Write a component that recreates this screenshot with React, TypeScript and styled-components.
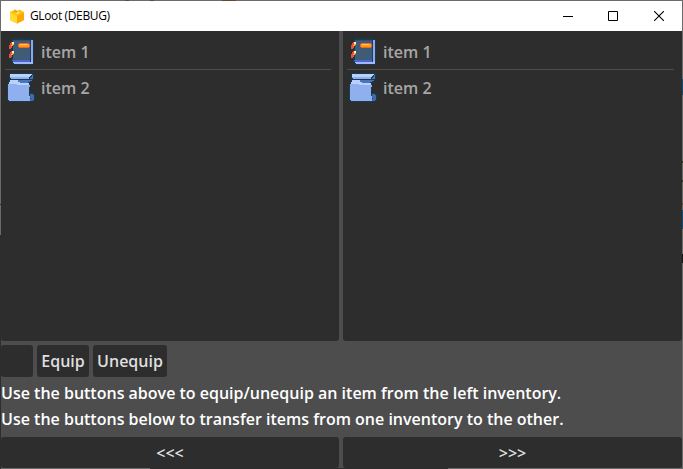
import React from 'react';
import styled, { createGlobalStyle } from 'styled-components';

const GlobalStyle = createGlobalStyle`
  * { box-sizing: border-box; }
  body { margin: 0; overflow: hidden; }
`;

const Window = styled.div`
  width: 683px;
  height: 469px;
  display: flex;
  flex-direction: column;
  background:
    linear-gradient(#2d2d2d, #2d2d2d) 0 235px / 1px 234px no-repeat,
    linear-gradient(#333, #333) 0 204px / 1px 1px no-repeat,
    linear-gradient(#174a6c, #174a6c) 682px 79px / 1px 16px no-repeat,
    linear-gradient(#3b3420, #3b3420) 682px 161px / 1px 2px no-repeat,
    linear-gradient(#3b3420, #3b3420) 682px 180px / 1px 2px no-repeat,
    linear-gradient(#674b29, #674b29) 682px 203px / 1px 2px no-repeat,
    linear-gradient(#174a6c, #174a6c) 682px 210px / 1px 19px no-repeat,
    linear-gradient(#151515, #151515) 682px 254px / 1px 9px no-repeat,
    linear-gradient(#674b29, #674b29) 222px 0 / 14px 1px no-repeat,
    linear-gradient(#674b29, #674b29) 125px 0 / 4px 1px no-repeat,
    linear-gradient(#674b29, #674b29) 150px 0 / 4px 1px no-repeat,
    linear-gradient(#2d2d2d, #2d2d2d) 150px 468px / 298px 1px no-repeat,
    #6b6b6b;
  padding: 1px;
  font-family: 'Open Sans', 'Noto Sans', sans-serif;
`;

const TitleBar = styled.header`
  height: 30px;
  flex: none;
  display: flex;
  align-items: center;
  background: #fff;
  padding-left: 8px;
`;

const Title = styled.span`
  flex: 1;
  margin-left: 5px;
  color: #000;
  font-size: 12px;
  line-height: 16px;
  letter-spacing: -0.37px;
  white-space: nowrap;
`;

const WindowButton = styled.button`
  width: 46px;
  height: 30px;
  border: 0;
  padding: 0;
  display: grid;
  place-items: center;
  background: transparent;
  &:first-of-type { padding-left: 2px; }
`;

const Content = styled.main`
  height: 437px;
  flex: none;
  display: flex;
  flex-direction: column;
  background: #4d4d4d;
`;

const Inventories = styled.div`
  display: flex;
  gap: 4px;
  height: 310px;
`;

const Inventory = styled.ul<{ $wide?: boolean }>`
  width: ${p => (p.$wide ? 339 : 338)}px;
  margin: 0;
  padding: 3px 8px 0 4px;
  list-style: none;
  background: #2d2d2d;
  border-radius: 0 0 3px 3px;
`;

const Item = styled.li`
  height: 36px;
  display: flex;
  align-items: center;
  gap: 4px;
  color: #a6a6a6;
  font-size: 16px;
  font-weight: 600;
  line-height: 22px;
  & + & { border-top: 1px solid #4c4c4c; }
  &:first-child { height: 35px; }
  svg { margin-bottom: 1px; }
`;

const Actions = styled.div`
  display: flex;
  gap: 4px;
  margin-top: 4px;
  height: 32px;
`;

const Button = styled.button<{ $width: number; $height?: number }>`
  width: ${p => p.$width}px;
  height: ${p => p.$height ?? 32}px;
  border: 0;
  border-radius: 3px;
  padding: 0;
  background: #2d2d2d;
  color: #dfdfdf;
  font: 600 16px/22px 'Open Sans', 'Noto Sans', sans-serif;
`;

const Hint = styled.p`
  margin: 4px 0 0;
  height: 22px;
  color: #fff;
  font-size: 16px;
  font-weight: 600;
  line-height: 24px;
  white-space: nowrap;
`;

const Transfers = styled.div`
  display: flex;
  gap: 4px;
  margin-top: 8px;
`;

const AppIcon = () => (
  <svg width="16" height="16" viewBox="0 0 16 16">
    <path d="M1 4 6 1.500 8 3l2.500-1.500L15 4v8l-7 3.500L1 12z" fill="#ffc20a" />
    <path d="M1 4.500l7 3.500v7.500L1 12z" fill="#ffdd30" />
    <path d="M8 8l7-3.500V12l-7 3.500z" fill="#ffa600" />
    <path d="M5 4.500 8 3l3 1.500L8 6z" fill="#fff0a0" />
    <path d="M6 1.500 8.500 3v2L5 4.500z" fill="#f5a300" />
  </svg>
);

const BookIcon = () => (
  <svg width="32" height="32" viewBox="0 0 32 32" shapeRendering="crispEdges">
    <path d="M8 3h18v1h2v1h1v23h-1v2H9v-1H7v-2H6V6h1V4h1z" fill="#19394c" />
    <path d="M8 5h17v20H8z" fill="#3f5b76" />
    <path d="M8 5h17v1H8z" fill="#344e6b" />
    <path d="M25 5h1v20h-1z" fill="#253a5e" />
    <path d="M26 5h2v22h-2z" fill="#8fa8ec" />
    <path d="M7 25h18v2H8z" fill="#4668d4" />
    <path d="M8 27h18v-1h2v3H9v-1H8z" fill="#a5b6f6" />
    <path d="M14 8h10v1h1v3h-1v1H14v-1h-1V9h1z" fill="#ee603e" />
    <path d="M14 9h10v3H14z" fill="#ff9c00" />
    <path d="M15 9h7v1h-7z" fill="#ffd044" />
    <path d="M6 7h3v3H8v1H7v2H6v1H4v-4h1V8h1zM6 16h3v3H8v1H7v2H6v1H4v-4h1v-2h1z" fill="#ef4a42" />
    <path d="M7 8h2v2H8v1H6v-1h1zM7 17h2v2H8v1H6v-1h1z" fill="#ffb21f" />
    <path d="M7 7h2v2H7zM7 16h2v2H7z" fill="#fff2a5" />
  </svg>
);

const ScrollIcon = () => (
  <svg width="32" height="32" viewBox="0 0 32 32" shapeRendering="crispEdges">
    <path d="M5 2h24v6h-1v2h-2v2h-1v10h4v1h1v6h-1v1h-3v1H3v-1H2V13h1v-2h1V3h1z" fill="#173c50" />
    <path d="M5 3h22v1h-1v1h-1v1H5z" fill="#b9d2fc" />
    <path d="M5 6h19v2H6V7H5z" fill="#8fb0f5" />
    <path d="M27 4h1v4h-2V6h1zM25 7h1v1h-1z" fill="#4d73bb" />
    <path d="M13 9h14v1h-2v1h-2v1h-8v-1h-2z" fill="#4d73bb" />
    <path d="M5 9h8v2h2v1h9v2h1v2h-1v9h1v5H4v-1H3V13h1v-2h1z" fill="#8fafee" />
    <path d="M5 9h8v2h2v1h9v2H12v-1H4v-2h1z" fill="#b9d2fc" />
    <path d="M25 23h3v1h1v5h-1v1h-3v-2h1v-1h-1z" fill="#416aae" />
  </svg>
);

const MinimizeIcon = () => (
  <svg width="10" height="10" viewBox="0 0 10 10"><path d="M0 5.5h10" stroke="#000" /></svg>
);
const MaximizeIcon = () => (
  <svg width="10" height="10" viewBox="0 0 10 10"><path d="M.5.5h9v9h-9z" fill="none" stroke="#000" /></svg>
);
const CloseIcon = () => (
  <svg width="10" height="10" viewBox="0 0 10 10"><path d="m0 0 10 10M10 0 0 10" stroke="#000" strokeWidth="1.1" /></svg>
);

const ItemList = ({ wide }: { wide?: boolean }) => (
  <Inventory $wide={wide}>
    <Item><BookIcon />item 1</Item>
    <Item><ScrollIcon />item 2</Item>
  </Inventory>
);

export default function App() {
  return (
    <>
      <GlobalStyle />
      <Window>
        <TitleBar>
          <AppIcon />
          <Title>GLoot (DEBUG)</Title>
          <WindowButton aria-label="Minimize"><MinimizeIcon /></WindowButton>
          <WindowButton aria-label="Maximize"><MaximizeIcon /></WindowButton>
          <WindowButton aria-label="Close"><CloseIcon /></WindowButton>
        </TitleBar>
        <Content>
          <Inventories>
            <ItemList />
            <ItemList wide />
          </Inventories>
          <Actions>
            <Button $width={32} aria-label="Equipped item" />
            <Button $width={52}>Equip</Button>
            <Button $width={74}>Unequip</Button>
          </Actions>
          <Hint>Use the buttons above to equip/unequip an item from the left inventory.</Hint>
          <Hint>Use the buttons below to transfer items from one inventory to the other.</Hint>
          <Transfers>
            <Button $width={338} $height={31}>&lt;&lt;&lt;</Button>
            <Button $width={339} $height={31}>&gt;&gt;&gt;</Button>
          </Transfers>
        </Content>
      </Window>
    </>
  );
}
